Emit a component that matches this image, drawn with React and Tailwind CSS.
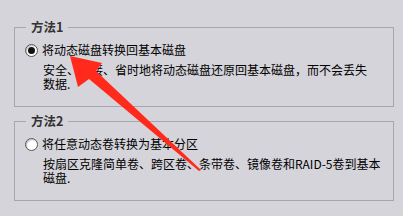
import React from 'react';

const cjk = { fontFamily: '"Noto Sans CJK SC", "Liberation Sans", sans-serif' };

function Radio({ checked }) {
  return (
    <span className="w-[13px] h-[13px] rounded-full border border-[#555] bg-white flex items-center justify-center shrink-0 shadow-[inset_1px_1px_1px_rgba(0,0,0,0.25)]">
      {checked && <span className="w-[7px] h-[7px] rounded-full bg-[#111]" />}
    </span>
  );
}

function Group({ title, label, lines, checked, className }) {
  return (
    <fieldset className={`w-[380px] border border-[#a7a7ab] ml-[14px] pb-[15px] ${className || ''}`}>
      <legend className="ml-[11px] px-[5px] text-[12.5px] leading-[14px] font-bold text-[#333]">
        {title}
      </legend>
      <div className="flex items-center gap-[4px] ml-[10px] mt-[9px] h-[14px]">
        <Radio checked={checked} />
        <span className="text-[12px] leading-[14px] text-black whitespace-nowrap">{label}</span>
      </div>
      <div className="pl-[28px] mt-[6px] text-[12px] leading-[14px] text-black">
        {lines.map((l, i) => (
          <div key={i} className="whitespace-nowrap">{l}</div>
        ))}
      </div>
    </fieldset>
  );
}

export default function App() {
  return (
    <div className="relative w-[403px] h-[216px] bg-[#d5d4da] overflow-hidden pt-[20px]" style={cjk}>
      <Group
        title="方法1"
        label="将动态磁盘转换回基本磁盘"
        checked
        lines={['安全、直接、省时地将动态磁盘还原回基本磁盘，而不会丢失', '数据.']}
      />
      <Group
        title="方法2"
        label="将任意动态卷转换为基本分区"
        className="mt-[7px]"
        lines={['按扇区克隆简单卷、跨区卷、条带卷、镜像卷和RAID-5卷到基本', '磁盘.']}
      />

      {/* red annotation arrow */}
      <svg className="absolute left-0 top-0 pointer-events-none" width="403" height="216" viewBox="0 0 403 216">
        <polygon
          points="70,56 102,63 96,71 201,170 199,171 89,79 78,87"
          fill="#ff2a1c"
        />
      </svg>
    </div>
  );
}
